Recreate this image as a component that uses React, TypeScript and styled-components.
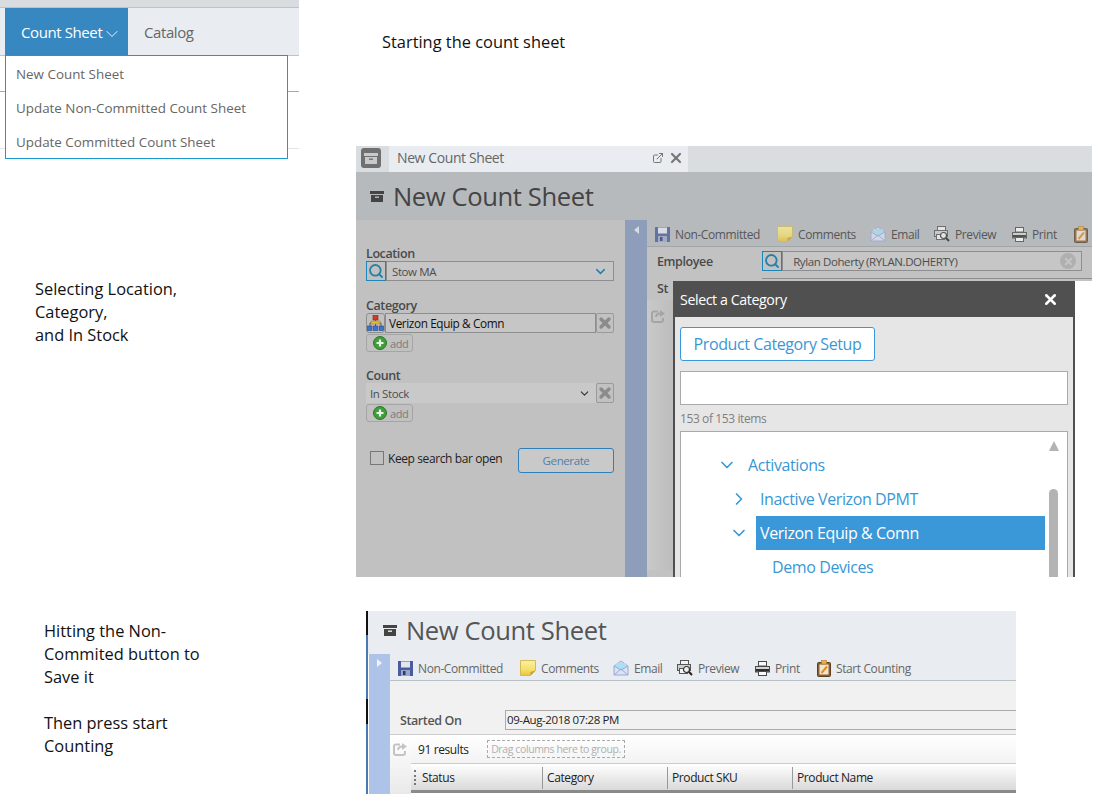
import styled, { createGlobalStyle } from "styled-components";
import { ChevronDown, ChevronRight, ExternalLink, Search, X } from "lucide-react";

const GlobalStyle = createGlobalStyle`
  html, body { margin: 0; padding: 0; background: #fff; }
  body { font-family: "Open Sans", "Noto Sans", sans-serif; letter-spacing: -0.025em; }
  * { box-sizing: border-box; }
`;

const Page = styled.div`
  width: 1110px;
  height: 811px;
  overflow: hidden;
  display: grid;
  grid-template-columns: 356px 754px;
  grid-template-rows: 146px 465px 200px;
`;

/* top left menu */
const MenuShot = styled.div`
  width: 299px;
  position: relative;
`;
const TopStrip = styled.div`
  height: 8px;
  background: #d9dde0;
  border-bottom: 1px solid #bfc3c6;
`;
const NavBar = styled.div`
  height: 48px;
  background: #e9edf1;
  border-bottom: 1px solid #bfc3c6;
  padding-left: 5px;
  display: flex;
  align-items: stretch;
`;
const NavActive = styled.div`
  width: 123px;
  background: #3787c1;
  color: #fff;
  font-size: 15px;
  display: flex;
  align-items: center;
  padding-left: 16px;
`;
const NavChevron = styled.span`
  display: flex;
  padding-top: 4px;
`;
const NavLink = styled.div`
  margin-left: 16px;
  color: #666;
  font-size: 15px;
  display: flex;
  align-items: center;
`;
const BackLine = styled.div<{ $light?: boolean }>`
  height: ${(p) => (p.$light ? 57 : 36)}px;
  border-bottom: 1px solid ${(p) => (p.$light ? "#e4e4e4" : "#a9a9a9")};
`;
const Dropdown = styled.div`
  position: absolute;
  left: 5px;
  top: 55px;
  width: 283px;
  height: 104px;
  background: #fff;
  border: 1px solid #1a9ad0;
  padding-top: 1px;
`;
const DropItem = styled.div`
  height: 34px;
  display: flex;
  align-items: center;
  padding-left: 10px;
  font-size: 13.4px;
  letter-spacing: 0;
  color: #666;
`;

/* notes */
const TopNote = styled.div`
  font-size: 16.4px;
  letter-spacing: 0;
  line-height: 23px;
  color: #111;
  padding: 30px 0 0 26px;
`;
const SideNote = styled.div<{ $left: number; $top: number; $width: number }>`
  font-size: 16.4px;
  letter-spacing: 0;
  line-height: 23px;
  color: #111;
  margin-left: ${(p) => p.$left}px;
  padding-top: ${(p) => p.$top}px;
  width: ${(p) => p.$width}px;
`;
const Gap = styled.div`
  height: 23px;
`;

/* first screenshot */
const DimShot = styled.div`
  width: 736px;
  height: 431px;
  display: flex;
  flex-direction: column;
  background: #fff;
  overflow: hidden;
`;
const TabBar = styled.div`
  height: 26px;
  flex: none;
  background: #d9dde0;
  display: flex;
  padding-left: 5px;
`;
const ArchiveBox = styled.div`
  width: 20px;
  height: 20px;
  margin-top: 2px;
  border-radius: 3px;
  background: #707070;
  display: flex;
  align-items: center;
  justify-content: center;
`;
const Tab = styled.div`
  width: 299px;
  margin-left: 8px;
  background: #e9edf1;
  display: flex;
  align-items: center;
  padding: 0 4px 3px 8px;
  font-size: 14px;
  color: #666;
`;
const TabTitle = styled.span`
  flex: 1;
`;
const TabIcons = styled.span`
  display: flex;
  align-items: center;
  gap: 4px;
  color: #777;
`;
const TitleBar = styled.div<{ $dim?: boolean; $height: number; $left: number; $lift?: number }>`
  height: ${(p) => p.$height}px;
  flex: none;
  background: ${(p) => (p.$dim ? "#b7babd" : "#e9edf1")};
  color: ${(p) => (p.$dim ? "#444" : "#555")};
  display: flex;
  align-items: center;
  padding-left: ${(p) => p.$left}px;
  padding-bottom: ${(p) => p.$lift ?? 0}px;
  gap: 9px;
  font-size: 25.6px;
`;
const DimBody = styled.div`
  flex: 1;
  min-height: 0;
  display: flex;
`;
const SidePanel = styled.div`
  width: 269px;
  background: #c1c1c1;
  padding: 27px 11px 0 10px;
`;
const FieldLabel = styled.div<{ $top?: number }>`
  font-size: 12.5px;
  line-height: 14px;
  font-weight: 600;
  color: #4a4a4a;
  margin-top: ${(p) => p.$top ?? 0}px;
`;
const FieldRow = styled.div`
  display: flex;
  height: 20px;
  align-items: stretch;
`;
const SearchTag = styled.div`
  width: 20px;
  flex: none;
  border: 1px solid #1a87b8;
  color: #2780a8;
  display: flex;
  align-items: center;
  justify-content: center;
`;
const FieldBox = styled.div<{ $flat?: boolean; $dark?: boolean }>`
  flex: 1;
  display: flex;
  align-items: center;
  justify-content: space-between;
  padding: 0 5px 0 ${(p) => (p.$flat ? 4 : p.$dark ? 3 : 5)}px;
  background: ${(p) => (p.$flat ? "#c9c9c9" : "#c6c6c6")};
  border: ${(p) => (p.$flat ? "none" : "1px solid #8e8e8e")};
  font-size: ${(p) => (p.$dark ? 11.8 : 11.5)}px;
  color: ${(p) => (p.$dark ? "#111" : "#4d4d4d")};
`;
const HierarchyTag = styled.div`
  width: 19px;
  flex: none;
  border: 1px solid #8e8e8e;
  border-radius: 3px;
  display: flex;
  align-items: center;
  justify-content: center;
`;
const ClearTag = styled.div`
  width: 18px;
  flex: none;
  border: 1px solid #9a9a9a;
  border-radius: 2px;
  color: #8b8b8b;
  display: flex;
  align-items: center;
  justify-content: center;
`;
const AddButton = styled.div`
  width: 47px;
  height: 18px;
  margin-top: 1px;
  border: 1px solid #a5a5a5;
  border-radius: 3px;
  display: flex;
  align-items: center;
  gap: 3px;
  padding-left: 6px;
  font-size: 11px;
  color: #7c7c7c;
`;
const KeepRow = styled.div`
  display: flex;
  align-items: flex-start;
  margin-top: 26px;
  padding-left: 4px;
`;
const CheckBox = styled.div`
  width: 14px;
  height: 14px;
  margin-top: 3px;
  border: 1px solid #777;
  margin-right: 4px;
`;
const KeepText = styled.div`
  font-size: 12px;
  line-height: 21px;
  color: #222;
  flex: 1;
`;
const GenerateButton = styled.div`
  width: 96px;
  height: 25px;
  border: 1px solid #2f7fb8;
  border-radius: 3px;
  background: #c9c9c9;
  color: #4f80ab;
  font-size: 11.5px;
  display: flex;
  align-items: center;
  justify-content: center;
`;
const CollapseStrip = styled.div<{ $dim?: boolean; $open?: boolean }>`
  width: ${(p) => (p.$open ? 21 : 22)}px;
  flex: none;
  background: ${(p) => (p.$dim ? "#8d9dba" : "#adc3e8")};
  display: flex;
  justify-content: center;
  padding-top: ${(p) => (p.$open ? 5 : 6)}px;
`;
const Arrow = styled.div<{ $right?: boolean }>`
  width: 0;
  height: 0;
  border-top: 4px solid transparent;
  border-bottom: 4px solid transparent;
  ${(p) =>
    p.$right
      ? "border-left: 5px solid #f0f3f8;"
      : "border-right: 5px solid #d7dce6;"}
`;
const DimMain = styled.div`
  flex: 1;
  min-width: 0;
  display: flex;
  flex-direction: column;
`;
const DimForm = styled.div`
  height: 34px;
  flex: none;
  background: #c2c2c2;
  padding: 4px 10px 0 10px;
`;
const EmployeeRow = styled.div`
  display: flex;
  align-items: flex-start;
`;
const EmployeeLabel = styled.div`
  width: 105px;
  font-size: 12.5px;
  line-height: 22px;
  font-weight: 600;
  color: #4a4a4a;
`;
const EmployeeField = styled(FieldRow)`
  flex: 1;
`;
const NextFieldTop = styled.div`
  margin: 5px -10px 0 105px;
  border-top: 1px solid #8e8e8e;
`;
const ClearDot = styled.div`
  width: 16px;
  height: 16px;
  border-radius: 50%;
  background: #b0b0b0;
  color: #c6c6c6;
  display: flex;
  align-items: center;
  justify-content: center;
`;
const LowerRow = styled.div`
  flex: 1;
  min-height: 0;
  display: flex;
`;
const Gutter = styled.div`
  width: 26px;
  flex: none;
  background: #c2c2c2;
`;
const StLabel = styled.div`
  font-size: 12.5px;
  line-height: 15px;
  font-weight: 600;
  color: #4a4a4a;
  padding-left: 10px;
`;
const GutterTool = styled.div`
  margin-top: 4px;
  height: 270px;
  background: linear-gradient(90deg, #c9c9c9, #bdbdbd);
  padding: 6px 0 0 4px;
`;

/* modal */
const Modal = styled.div`
  width: 402px;
  border: solid #505050;
  border-width: 0 2px;
  background: #e6e6e6;
  display: flex;
  flex-direction: column;
`;
const ModalHead = styled.div`
  height: 36px;
  flex: none;
  background: #505050;
  color: #fff;
  font-size: 14.2px;
  display: flex;
  align-items: center;
  justify-content: space-between;
  padding: 1px 14px 0 5px;
`;
const ModalBody = styled.div`
  flex: 1;
  min-height: 0;
  padding: 10px 5px 0;
  display: flex;
  flex-direction: column;
`;
const SetupButton = styled.div`
  width: 195px;
  height: 34px;
  flex: none;
  background: #fff;
  border: 1px solid #3a97d8;
  border-radius: 3px;
  color: #3a97d4;
  font-size: 16px;
  display: flex;
  align-items: center;
  justify-content: center;
`;
const FilterInput = styled.div`
  height: 34px;
  flex: none;
  margin-top: 10px;
  background: #fff;
  border: 1px solid #aaa;
`;
const ItemCount = styled.div`
  flex: none;
  margin-top: 6px;
  height: 20px;
  line-height: 16px;
  font-size: 12px;
  color: #808080;
`;
const Tree = styled.div`
  flex: 1;
  min-height: 0;
  background: #fff;
  border: 1px solid #aaa;
  border-bottom: none;
  padding-top: 16px;
  position: relative;
  overflow: hidden;
`;
const TreeRow = styled.div<{ $level: number }>`
  height: 34px;
  display: flex;
  align-items: center;
  padding: 0 22px 0 ${(p) => 34 + p.$level * 12}px;
  color: #3a97d4;
`;
const Twist = styled.div`
  width: 29px;
  flex: none;
  padding-left: 2px;
  display: flex;
  align-items: center;
`;
const TreeLabel = styled.div<{ $selected?: boolean }>`
  flex: 1;
  height: 34px;
  line-height: 35px;
  padding-left: 4px;
  font-size: 16px;
  background: ${(p) => (p.$selected ? "#3a97d8" : "transparent")};
  color: ${(p) => (p.$selected ? "#fff" : "#3a97d4")};
`;
const ScrollUp = styled.div`
  position: absolute;
  right: 8px;
  top: 9px;
  width: 0;
  height: 0;
  border-left: 5px solid transparent;
  border-right: 5px solid transparent;
  border-bottom: 10px solid #b3b3b3;
`;
const ScrollThumb = styled.div`
  position: absolute;
  right: 9px;
  top: 57px;
  bottom: 0;
  width: 9px;
  border-radius: 5px 5px 0 0;
  background: #b3b3b3;
`;

/* toolbar, used by both screenshots */
const Toolbar = styled.div<{ $dim?: boolean }>`
  height: 27px;
  flex: none;
  display: flex;
  align-items: center;
  padding: 2px 0 0 8px;
  overflow: hidden;
  white-space: nowrap;
  background: ${(p) => (p.$dim ? "#b7babd" : "#e9edf1")};
  border-bottom: 1px solid ${(p) => (p.$dim ? "#a2a6a9" : "#b9c1c8")};
  color: ${(p) => (p.$dim ? "#565656" : "#666")};
`;
const ToolItem = styled.div<{ $width?: number }>`
  display: flex;
  align-items: center;
  gap: 5px;
  flex: none;
  width: ${(p) => (p.$width ? `${p.$width}px` : "auto")};
  font-size: 12px;
`;
const IconSlot = styled.span<{ $dim?: boolean }>`
  display: flex;
  opacity: ${(p) => (p.$dim ? 0.75 : 1)};
`;

/* second screenshot */
const LightShot = styled.div`
  width: 650px;
  height: 183px;
  margin-left: 10px;
  display: flex;
  overflow: hidden;
`;
const EdgeLine = styled.div`
  width: 2px;
  flex: none;
  background: linear-gradient(#111 0 13%, #4a78b0 13% 48%, #111 48% 62%, #4a78b0 62% 100%);
`;
const LightInner = styled.div`
  flex: 1;
  min-width: 0;
  display: flex;
  flex-direction: column;
`;
const LightBody = styled.div`
  flex: 1;
  min-height: 0;
  display: flex;
  padding-left: 1px;
  background: #fff;
`;
const LightMain = styled.div`
  flex: 1;
  min-width: 0;
  display: flex;
  flex-direction: column;
  background: #f1f1f1;
`;
const StartedRow = styled.div`
  margin-top: 29px;
  height: 20px;
  flex: none;
  display: flex;
  padding-left: 10px;
  align-items: stretch;
`;
const StartedLabel = styled.div`
  width: 105px;
  font-size: 12.5px;
  font-weight: 600;
  color: #555;
  line-height: 21px;
`;
const StartedValue = styled.div`
  flex: 1;
  border: 1px solid #aaa;
  border-right: none;
  font-size: 11.5px;
  line-height: 18px;
  padding-left: 1px;
  color: #222;
`;
const GridArea = styled.div`
  margin-top: 4px;
  flex: 1;
  min-height: 0;
  display: flex;
  background: #fff;
  border-top: 1px solid #ccc;
`;
const GridGutter = styled.div`
  width: 21px;
  flex: none;
  background: linear-gradient(#fff, #e9e9e9);
  padding: 4px 0 0 3px;
`;
const GridMain = styled.div`
  flex: 1;
  min-width: 0;
  display: flex;
  flex-direction: column;
`;
const ResultsBar = styled.div`
  height: 29px;
  flex: none;
  display: flex;
  align-items: center;
  padding-left: 7px;
  border-bottom: 1px solid #ccc;
  background: linear-gradient(#fff, #f3f3f3);
`;
const ResultsText = styled.div`
  width: 69px;
  font-size: 12px;
  color: #222;
`;
const DropHint = styled.div`
  width: 138px;
  height: 18px;
  border: 1px dashed #aaa;
  font-size: 10.5px;
  color: #b0b0b0;
  text-align: center;
  line-height: 16px;
`;
const ColumnHead = styled.div`
  height: 29px;
  flex: none;
  display: flex;
  align-items: stretch;
  background: linear-gradient(#fff, #d9d9d9);
  border-bottom: 3px solid #8a8a8a;
`;
const GripCell = styled.div`
  width: 7px;
  flex: none;
  margin: 6px 0 5px;
  display: flex;
  justify-content: center;
`;
const Grip = styled.div`
  width: 2px;
  border-left: 2px dotted #777;
`;
const ColumnCell = styled.div<{ $width: number; $last?: boolean }>`
  width: ${(p) => p.$width}px;
  flex: none;
  margin: 3px 0 1px;
  padding-left: 4px;
  font-size: 12px;
  line-height: 22px;
  color: #222;
  border-right: ${(p) => (p.$last ? "none" : "1px solid #999")};
`;

const ArchiveIcon = ({ color, back }: { color: string; back: string }) => (
  <svg width="14" height="11" viewBox="0 0 14 11">
    <rect x="0" y="0" width="14" height="3" fill={color} />
    <rect x="1" y="4" width="12" height="7" fill={color} />
    <rect x="5" y="5.5" width="4" height="1.4" fill={back} />
  </svg>
);

const RefreshIcon = ({ color }: { color: string }) => (
  <svg width="15" height="14" viewBox="0 0 15 14" fill="none" stroke={color} strokeWidth="2">
    <path d="M7 2.5H3Q1 2.5 1 4.5V11Q1 13 3 13H10Q12 13 12 11V9" />
    <path d="M5 8Q5 4.5 9.5 4.5" />
    <path d="M9 1L14 4.5L9 8Z" fill={color} stroke="none" />
  </svg>
);

const FloppyIcon = () => (
  <svg width="15" height="15" viewBox="0 0 15 15">
    <rect width="15" height="15" fill="#4a5c9c" />
    <rect x="3" y="0.5" width="9" height="6" fill="#e3e6ef" />
    <rect x="3" y="9" width="9" height="6" fill="#9aa6c8" />
    <rect x="5" y="10" width="2.5" height="4" fill="#2d3a70" />
  </svg>
);
const NoteIcon = ({ id }: { id: string }) => (
  <svg width="16" height="16" viewBox="0 0 16 16">
    <defs>
      <linearGradient id={id} x1="0" y1="0" x2="0" y2="1">
        <stop offset="0" stopColor="#fbf0a0" />
        <stop offset="0.6" stopColor="#f6e06a" />
        <stop offset="1" stopColor="#e8c23c" />
      </linearGradient>
    </defs>
    <path d="M0.5 0.5H15.5V10.5L10.5 15.5H0.5Z" fill={`url(#${id})`} stroke="#d3bb58" />
    <path d="M15.5 10.5L10.5 15.5V12Z" fill="#c99e30" />
  </svg>
);
const MailIcon = () => (
  <svg width="16" height="16" viewBox="0 0 16 16">
    <path d="M1 6L8 1L15 6V15H1Z" fill="#dbe2f6" stroke="#9aa8d4" />
    <path d="M3 7V3H13V7L8 10Z" fill="#a9e0f4" />
    <path d="M1 15L8 9L15 15M1 6L8 10L15 6" fill="none" stroke="#9aa8d4" />
  </svg>
);
const PreviewIcon = () => (
  <svg width="16" height="16" viewBox="0 0 16 16" fill="none" stroke="#555">
    <rect x="3.5" y="0.5" width="8" height="4" fill="#f2f2f2" />
    <rect x="0.5" y="4.5" width="13" height="6" fill="#cfcfcf" />
    <rect x="2.5" y="8.5" width="8" height="5" fill="#f4f4f4" />
    <circle cx="9.5" cy="9.5" r="3" fill="#eef2f6" stroke="#333" strokeWidth="1.2" />
    <path d="M11.8 11.8L15 15" stroke="#222" strokeWidth="2" />
  </svg>
);
const PrintIcon = () => (
  <svg width="15" height="15" viewBox="0 0 15 15" stroke="#4a4a4a">
    <rect x="3.5" y="0.5" width="8" height="4.5" fill="#fafafa" />
    <rect x="0.5" y="5.5" width="14" height="5.5" fill="#d4d4d4" />
    <rect x="1" y="8" width="13" height="2.5" fill="#2e2e2e" stroke="none" />
    <rect x="3.5" y="10.5" width="8" height="4" fill="#fafafa" />
  </svg>
);
const ClipboardIcon = () => (
  <svg width="14" height="17" viewBox="0 0 14 17">
    <rect x="0.5" y="2.5" width="13" height="14" rx="1" fill="#8a5f38" stroke="#5c4020" />
    <rect x="2.5" y="4.5" width="9" height="10" fill="#efe6d2" />
    <rect x="4.5" y="0.5" width="5" height="3.5" fill="#f0b040" stroke="#b07a20" strokeWidth="0.6" />
    <path d="M4.5 13L10 6.5" stroke="#e88a20" strokeWidth="2" />
  </svg>
);
const HierarchyIcon = () => (
  <svg width="17" height="17" viewBox="0 0 17 17">
    <path d="M8.5 5V8M3 11V8H14V11M8.5 8V11" fill="none" stroke="#6a5a20" />
    <rect x="6" y="0.5" width="5" height="4.5" fill="#d23a2a" stroke="#8a2418" strokeWidth="0.6" />
    <rect x="4" y="6" width="9" height="3" fill="#e8b830" stroke="#9a7a18" strokeWidth="0.5" />
    <rect x="0.5" y="11" width="4.5" height="4.5" fill="#3f73c9" stroke="#264a8a" strokeWidth="0.6" />
    <rect x="6.2" y="11" width="4.5" height="4.5" fill="#3f73c9" stroke="#264a8a" strokeWidth="0.6" />
    <rect x="12" y="11" width="4.5" height="4.5" fill="#3f73c9" stroke="#264a8a" strokeWidth="0.6" />
  </svg>
);
const AddIcon = () => (
  <svg width="14" height="14" viewBox="0 0 14 14">
    <circle cx="7" cy="7" r="6.5" fill="#3f9e3a" stroke="#2a7a28" />
    <path d="M7 3.5V10.5M3.5 7H10.5" stroke="#e8f4e8" strokeWidth="2.2" />
  </svg>
);

function Tools({ dim }: { dim?: boolean }) {
  // the dimmed shot is cropped right after the clipboard icon
  return (
    <Toolbar $dim={dim}>
      <ToolItem $width={122}>
        <IconSlot $dim={dim}><FloppyIcon /></IconSlot>
        Non-Committed
      </ToolItem>
      <ToolItem $width={93}>
        <IconSlot $dim={dim}><NoteIcon id={dim ? "noteDim" : "noteLight"} /></IconSlot>
        Comments
      </ToolItem>
      <ToolItem $width={64}>
        <IconSlot $dim={dim}><MailIcon /></IconSlot>
        Email
      </ToolItem>
      <ToolItem $width={78}>
        <IconSlot $dim={dim}><PreviewIcon /></IconSlot>
        Preview
      </ToolItem>
      <ToolItem $width={62}>
        <IconSlot $dim={dim}><PrintIcon /></IconSlot>
        Print
      </ToolItem>
      <ToolItem>
        <IconSlot $dim={dim}><ClipboardIcon /></IconSlot>
        {dim ? null : "Start Counting"}
      </ToolItem>
    </Toolbar>
  );
}

const columns = [
  { name: "Status", width: 125 },
  { name: "Category", width: 125 },
  { name: "Product SKU", width: 125 },
  { name: "Product Name", width: 220, last: true },
];

export default function App() {
  return (
    <Page>
      <GlobalStyle />
      <MenuShot>
        <TopStrip />
        <NavBar>
          <NavActive>
            Count Sheet
            <NavChevron>
              <ChevronDown size={20} strokeWidth={1.1} />
            </NavChevron>
          </NavActive>
          <NavLink>Catalog</NavLink>
        </NavBar>
        <BackLine />
        <BackLine $light />
        <Dropdown>
          <DropItem>New Count Sheet</DropItem>
          <DropItem>Update Non-Committed Count Sheet</DropItem>
          <DropItem>Update Committed Count Sheet</DropItem>
        </Dropdown>
      </MenuShot>
      <TopNote>Starting the count sheet</TopNote>

      <SideNote $left={35} $top={131} $width={180}>
        Selecting Location,
        <br />
        Category,
        <br />
        and In Stock
      </SideNote>
      <DimShot>
        <TabBar>
          <ArchiveBox>
            <ArchiveIcon color="#c9c9c9" back="#707070" />
          </ArchiveBox>
          <Tab>
            <TabTitle>New Count Sheet</TabTitle>
            <TabIcons>
              <ExternalLink size={12} />
              <X size={16} strokeWidth={3.2} />
            </TabIcons>
          </Tab>
        </TabBar>
        <TitleBar $dim $height={48} $left={14}>
          <ArchiveIcon color="#444" back="#b7babd" />
          New Count Sheet
        </TitleBar>
        <DimBody>
          <SidePanel>
            <FieldLabel>Location</FieldLabel>
            <FieldRow>
              <SearchTag>
                <Search size={16} strokeWidth={2.8} />
              </SearchTag>
              <FieldBox>
                Stow MA
                <ChevronDown size={15} strokeWidth={2.4} color="#2780a8" />
              </FieldBox>
            </FieldRow>
            <FieldLabel $top={18}>Category</FieldLabel>
            <FieldRow>
              <HierarchyTag>
                <HierarchyIcon />
              </HierarchyTag>
              <FieldBox $dark>Verizon Equip &amp; Comn</FieldBox>
              <ClearTag>
                <X size={16} strokeWidth={5} />
              </ClearTag>
            </FieldRow>
            <AddButton>
              <AddIcon />
              add
            </AddButton>
            <FieldLabel $top={17}>Count</FieldLabel>
            <FieldRow>
              <FieldBox $flat>
                In Stock
                <ChevronDown size={13} strokeWidth={2} color="#333" />
              </FieldBox>
              <ClearTag>
                <X size={16} strokeWidth={5} />
              </ClearTag>
            </FieldRow>
            <AddButton>
              <AddIcon />
              add
            </AddButton>
            <KeepRow>
              <CheckBox />
              <KeepText>Keep search bar open</KeepText>
              <GenerateButton>Generate</GenerateButton>
            </KeepRow>
          </SidePanel>
          <CollapseStrip $dim>
            <Arrow />
          </CollapseStrip>
          <DimMain>
            <Tools dim />
            <DimForm>
              <EmployeeRow>
                <EmployeeLabel>Employee</EmployeeLabel>
                <EmployeeField>
                  <SearchTag>
                    <Search size={16} strokeWidth={2.8} />
                  </SearchTag>
                  <FieldBox>
                    &nbsp;&nbsp;Rylan Doherty (RYLAN.DOHERTY)
                    <ClearDot>
                      <X size={11} strokeWidth={4} />
                    </ClearDot>
                  </FieldBox>
                </EmployeeField>
              </EmployeeRow>
              <NextFieldTop />
            </DimForm>
            <LowerRow>
              <Gutter>
                <StLabel>St</StLabel>
                <GutterTool>
                  <RefreshIcon color="#a5a5a5" />
                </GutterTool>
              </Gutter>
              <Modal>
                <ModalHead>
                  Select a Category
                  <X size={17} strokeWidth={3.6} />
                </ModalHead>
                <ModalBody>
                  <SetupButton>Product Category Setup</SetupButton>
                  <FilterInput />
                  <ItemCount>153 of 153 items</ItemCount>
                  <Tree>
                    <TreeRow $level={0}>
                      <Twist>
                        <ChevronDown size={20} strokeWidth={2} />
                      </Twist>
                      <TreeLabel>Activations</TreeLabel>
                    </TreeRow>
                    <TreeRow $level={1}>
                      <Twist>
                        <ChevronRight size={20} strokeWidth={2} />
                      </Twist>
                      <TreeLabel>Inactive Verizon DPMT</TreeLabel>
                    </TreeRow>
                    <TreeRow $level={1}>
                      <Twist>
                        <ChevronDown size={20} strokeWidth={2} />
                      </Twist>
                      <TreeLabel $selected>Verizon Equip &amp; Comn</TreeLabel>
                    </TreeRow>
                    <TreeRow $level={2}>
                      <Twist />
                      <TreeLabel>Demo Devices</TreeLabel>
                    </TreeRow>
                    <ScrollUp />
                    <ScrollThumb />
                  </Tree>
                </ModalBody>
              </Modal>
            </LowerRow>
          </DimMain>
        </DimBody>
      </DimShot>

      <SideNote $left={44} $top={8} $width={180}>
        Hitting the Non-
        <br />
        Commited button to
        <br />
        Save it
        <Gap />
        Then press start
        <br />
        Counting
      </SideNote>
      <LightShot>
        <EdgeLine />
        <LightInner>
          <TitleBar $height={43} $left={15} $lift={5}>
            <ArchiveIcon color="#444" back="#e9edf1" />
            New Count Sheet
          </TitleBar>
          <LightBody>
            <CollapseStrip $open>
              <Arrow $right />
            </CollapseStrip>
            <LightMain>
              <Tools />
              <StartedRow>
                <StartedLabel>Started On</StartedLabel>
                <StartedValue>09-Aug-2018 07:28 PM</StartedValue>
              </StartedRow>
              <GridArea>
                <GridGutter>
                  <RefreshIcon color="#c4c4c4" />
                </GridGutter>
                <GridMain>
                  <ResultsBar>
                    <ResultsText>91 results</ResultsText>
                    <DropHint>Drag columns here to group.</DropHint>
                  </ResultsBar>
                  <ColumnHead>
                    <GripCell>
                      <Grip />
                    </GripCell>
                    {columns.map((c) => (
                      <ColumnCell key={c.name} $width={c.width} $last={c.last}>
                        {c.name}
                      </ColumnCell>
                    ))}
                  </ColumnHead>
                </GridMain>
              </GridArea>
            </LightMain>
          </LightBody>
        </LightInner>
      </LightShot>
    </Page>
  );
}
